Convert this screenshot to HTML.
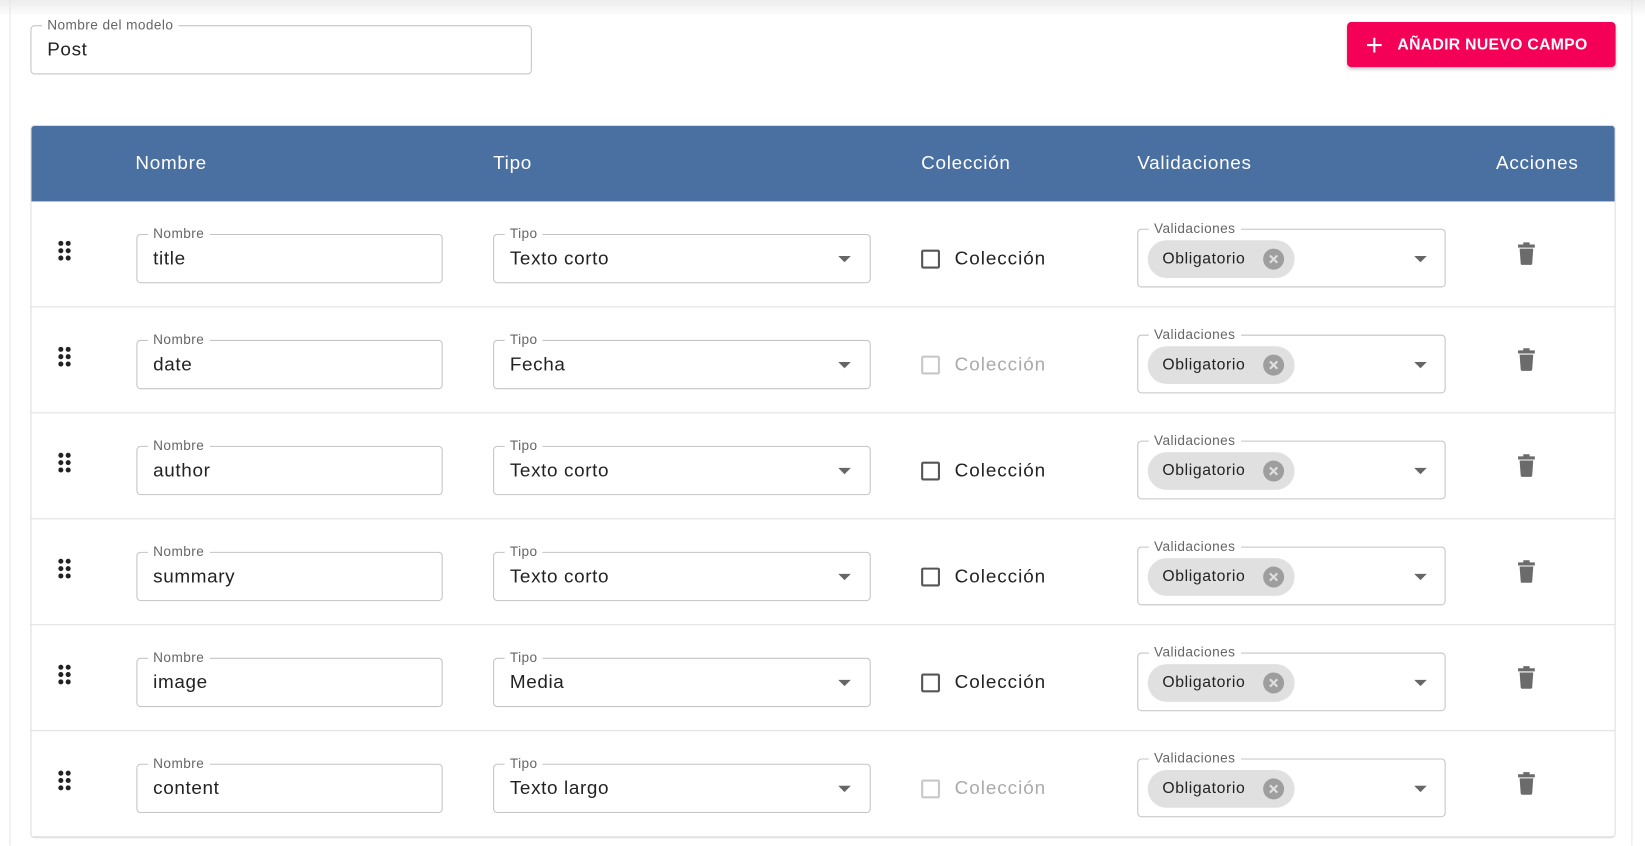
<!DOCTYPE html>
<html><head><meta charset="utf-8"><style>
*{box-sizing:border-box;margin:0;padding:0}
html,body{width:1645px;height:845px;overflow:hidden;background:#fff;font-family:"Liberation Sans",sans-serif}
#w{position:absolute;left:0;top:0;width:1568px;height:806px;transform:scale(1.0491);transform-origin:0 0}
.abs{position:absolute}
.topsh{left:0;top:0;width:1568px;height:16px;background:linear-gradient(#ececec,#fff)}
.lb{left:9px;top:0;width:1px;height:806px;background:#e6e6e6}
.rb{left:1555px;top:0;width:1px;height:806px;background:#e6e6e6}
.fld{position:absolute;border:1px solid #c4c4c4;border-radius:4px;background:#fff}
.lab{position:absolute;top:-8px;left:10px;padding:0 5px;background:#fff;font-size:13px;color:#666;line-height:14px;letter-spacing:.4px}
.val{position:absolute;left:15px;font-size:18px;color:#222;letter-spacing:.6px}
.arr{position:absolute;width:0;height:0;border-left:6px solid transparent;border-right:6px solid transparent;border-top:6px solid #666}
.btn{left:1284px;top:21px;width:256px;height:43px;background:#f50057;border-radius:4px;color:#fff;font-weight:bold;font-size:15px;letter-spacing:.3px;box-shadow:0 2px 3px rgba(0,0,0,.2)}
.tbl{left:29px;top:119px;width:1511px;height:680px;border:1px solid #ddd;border-radius:4px;overflow:hidden}
.hd{position:absolute;left:0;top:0;width:1511px;height:72px;background:#4a6fa1}
.hd span{position:absolute;top:25px;color:#fff;font-size:18px;letter-spacing:.7px}
.row{position:absolute;left:0;width:1511px;height:101px;border-bottom:1px solid #e0e0e0}
.cb{position:absolute;left:848px;top:46px;width:18px;height:18px;border:2px solid #555;border-radius:2px}
.cbl{position:absolute;left:880px;top:44px;font-size:18px;color:#222;letter-spacing:.9px}
.dis .cb{border-color:#c8c8c8}.dis .cbl{color:#aaa}
.chip{position:absolute;left:9px;top:10px;width:140px;height:36px;border-radius:18px;background:#e0e0e0}
.chip span{position:absolute;left:14px;top:9px;font-size:15px;color:#222;letter-spacing:.6px}
.x{position:absolute;left:110px;top:8px;width:20px;height:20px;border-radius:50%;background:#9e9e9e}
</style></head><body><div id="w">
<div class="abs topsh"></div><div class="abs lb"></div><div class="abs rb"></div>
<div class="fld" style="left:29px;top:24px;width:478px;height:47px"><div class="lab">Nombre del modelo</div><div class="val" style="top:12px">Post</div></div>
<div class="abs btn"><svg class="abs" style="left:18px;top:14px" width="16" height="16" viewBox="0 0 16 16"><path d="M8 1v14M1 8h14" stroke="#fff" stroke-width="2"/></svg><span class="abs" style="left:48px;top:13px">AÑADIR NUEVO CAMPO</span></div>
<div class="abs tbl">
<div class="hd"><span style="left:99px">Nombre</span><span style="left:440px">Tipo</span><span style="left:848px">Colección</span><span style="left:1054px">Validaciones</span><span style="left:1396px">Acciones</span></div>
<div id="rows"></div>
</div>
<script>
var d=[["title","Texto corto",0],["date","Fecha",1],["author","Texto corto",0],["summary","Texto corto",0],["image","Media",0],["content","Texto largo",1]];
var h="";
d.forEach(function(r,i){
h+='<div class="row'+(r[2]?' dis':'')+'" style="top:'+(72+101*i)+'px">'+
'<svg style="position:absolute;left:25px;top:37px" width="14" height="20" viewBox="0 0 14 20"><g fill="#222"><circle cx="3" cy="3" r="2.4"/><circle cx="10" cy="3" r="2.4"/><circle cx="3" cy="10" r="2.4"/><circle cx="10" cy="10" r="2.4"/><circle cx="3" cy="17" r="2.4"/><circle cx="10" cy="17" r="2.4"/></g></svg>'+
'<div class="fld" style="left:100px;top:31px;width:292px;height:47px"><div class="lab">Nombre</div><div class="val" style="top:12px">'+r[0]+'</div></div>'+
'<div class="fld" style="left:440px;top:31px;width:360px;height:47px"><div class="lab">Tipo</div><div class="val" style="top:12px">'+r[1]+'</div><div class="arr" style="left:328px;top:20px"></div></div>'+
'<div class="cb"></div><div class="cbl">Colección</div>'+
'<div class="fld" style="left:1054px;top:26px;width:294px;height:56px"><div class="lab">Validaciones</div><div class="chip"><span>Obligatorio</span><div class="x"><svg width="20" height="20" viewBox="0 0 20 20"><path d="M6.5 6.5l7 7M13.5 6.5l-7 7" stroke="#e0e0e0" stroke-width="2"/></svg></div></div><div class="arr" style="left:263px;top:25px"></div></div>'+
'<svg style="position:absolute;left:1416px;top:37px" width="18" height="24" viewBox="0 0 18 24"><path d="M1 4h16v3H1zM6 2h6v2H6zM2.5 8h13l-1 14a1.5 1.5 0 0 1-1.5 1.5H5a1.5 1.5 0 0 1-1.5-1.5z" fill="#6b6b6b"/></svg>'+
'</div>';});
document.getElementById("rows").innerHTML=h;
</script>
</div></body></html>
